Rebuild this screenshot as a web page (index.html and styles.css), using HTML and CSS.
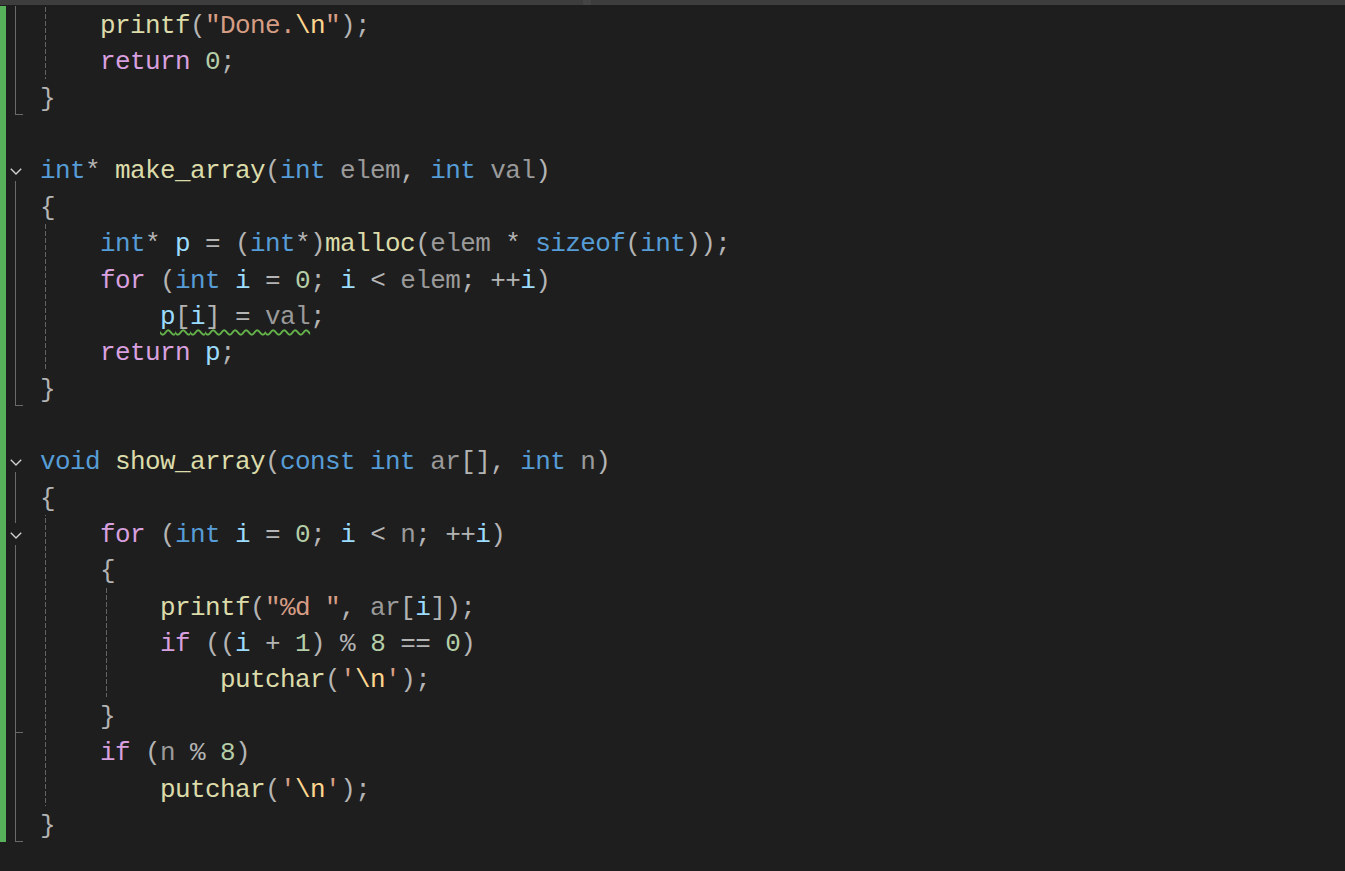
FILE: index.html
```html
<!DOCTYPE html>
<html lang="en">
<head>
<meta charset="utf-8">
<title>Editor</title>
<link rel="stylesheet" href="styles.css">
</head>
<body>
<div class="topbar"><div class="seg"></div><div class="sep"></div><div class="seg rest"></div></div>
<div class="editor">
  <div class="ln"><span class="chg"></span><span class="fold f-v"></span><div class="code g1">    <span class="fn">printf</span>(<span class="str">"Done.</span><span class="esc">\n</span><span class="str">"</span>);</div></div>
  <div class="ln"><span class="chg"></span><span class="fold f-v"></span><div class="code g1">    <span class="ctl">return</span> <span class="num">0</span>;</div></div>
  <div class="ln"><span class="chg"></span><span class="fold f-end"></span><div class="code">}</div></div>
  <div class="ln"><span class="chg"></span><span class="fold"></span><div class="code"> </div></div>
  <div class="ln"><span class="chg"></span><span class="fold f-open"><svg class="chev" width="12" height="7" viewBox="0 0 12 7"><polyline points="0.8,0.8 6,6 11.2,0.8" fill="none" stroke="#d0d0d0" stroke-width="1.4"/></svg></span><div class="code"><span class="kw">int</span>* <span class="fn">make_array</span>(<span class="kw">int</span> <span class="par">elem</span>, <span class="kw">int</span> <span class="par">val</span>)</div></div>
  <div class="ln"><span class="chg"></span><span class="fold f-v"></span><div class="code">{</div></div>
  <div class="ln"><span class="chg"></span><span class="fold f-v"></span><div class="code g1">    <span class="kw">int</span>* <span class="var">p</span> = (<span class="kw">int</span>*)<span class="fn">malloc</span>(<span class="par">elem</span> * <span class="kw">sizeof</span>(<span class="kw">int</span>));</div></div>
  <div class="ln"><span class="chg"></span><span class="fold f-v"></span><div class="code g1">    <span class="ctl">for</span> (<span class="kw">int</span> <span class="var">i</span> = <span class="num">0</span>; <span class="var">i</span> &lt; <span class="par">elem</span>; ++<span class="var">i</span>)</div></div>
  <div class="ln"><span class="chg"></span><span class="fold f-v"></span><div class="code g1">        <span class="sq"><span class="var">p</span>[<span class="var">i</span>] = <span class="par">val</span></span>;</div></div>
  <div class="ln"><span class="chg"></span><span class="fold f-v"></span><div class="code g1">    <span class="ctl">return</span> <span class="var">p</span>;</div></div>
  <div class="ln"><span class="chg"></span><span class="fold f-end"></span><div class="code">}</div></div>
  <div class="ln"><span class="chg"></span><span class="fold"></span><div class="code"> </div></div>
  <div class="ln"><span class="chg"></span><span class="fold f-open"><svg class="chev" width="12" height="7" viewBox="0 0 12 7"><polyline points="0.8,0.8 6,6 11.2,0.8" fill="none" stroke="#d0d0d0" stroke-width="1.4"/></svg></span><div class="code"><span class="kw">void</span> <span class="fn">show_array</span>(<span class="kw">const</span> <span class="kw">int</span> <span class="par">ar</span>[], <span class="kw">int</span> <span class="par">n</span>)</div></div>
  <div class="ln"><span class="chg"></span><span class="fold f-v"></span><div class="code">{</div></div>
  <div class="ln"><span class="chg"></span><span class="fold f-open f-nest"><svg class="chev" width="12" height="7" viewBox="0 0 12 7"><polyline points="0.8,0.8 6,6 11.2,0.8" fill="none" stroke="#d0d0d0" stroke-width="1.4"/></svg></span><div class="code g1">    <span class="ctl">for</span> (<span class="kw">int</span> <span class="var">i</span> = <span class="num">0</span>; <span class="var">i</span> &lt; <span class="par">n</span>; ++<span class="var">i</span>)</div></div>
  <div class="ln"><span class="chg"></span><span class="fold f-v"></span><div class="code g1">    {</div></div>
  <div class="ln"><span class="chg"></span><span class="fold f-v"></span><div class="code g1 g2">        <span class="fn">printf</span>(<span class="str">"%d "</span>, <span class="par">ar</span>[<span class="var">i</span>]);</div></div>
  <div class="ln"><span class="chg"></span><span class="fold f-v"></span><div class="code g1 g2">        <span class="ctl">if</span> ((<span class="var">i</span> + <span class="num">1</span>) % <span class="num">8</span> == <span class="num">0</span>)</div></div>
  <div class="ln"><span class="chg"></span><span class="fold f-v"></span><div class="code g1 g2">            <span class="fn">putchar</span>(<span class="str">'</span><span class="esc">\n</span><span class="str">'</span>);</div></div>
  <div class="ln"><span class="chg"></span><span class="fold f-end"></span><div class="code g1">    }</div></div>
  <div class="ln"><span class="chg"></span><span class="fold f-v"></span><div class="code g1">    <span class="ctl">if</span> (<span class="par">n</span> % <span class="num">8</span>)</div></div>
  <div class="ln"><span class="chg"></span><span class="fold f-v"></span><div class="code g1">        <span class="fn">putchar</span>(<span class="str">'</span><span class="esc">\n</span><span class="str">'</span>);</div></div>
  <div class="ln"><span class="chg"></span><span class="fold f-end"></span><div class="code">}</div></div>
</div>
</body>
</html>
```
FILE: styles.css
```css
* { box-sizing: border-box; }
html, body { margin: 0; height: 100%; }
body {
  background: #1e1e1e;
  overflow: hidden;
  font-family: "Liberation Mono", "DejaVu Sans Mono", monospace;
}
.topbar { height: 5px; display: flex; background: #3d3d3d; }
.topbar .seg { flex: 0 0 583px; }
.topbar .sep { flex: 0 0 8px; background: #454545; }
.topbar .rest { flex: 1; }

.editor { padding-top: 1px; display: flex; flex-direction: column; }
.ln { display: flex; height: 36.36px; }
.chg { flex: 0 0 6px; background: #57b05a; }
.fold {
  flex: 0 0 34px;
  position: relative;
  display: flex;
  align-items: flex-start;
  padding: 17px 0 0 4px;
}
.fold::before, .fold::after { content: none; position: absolute; background: #6a6a6a; }
.f-v::before, .f-end::before {
  content: "";
  left: 9px; top: 0; bottom: 0; width: 1px;
}
.f-end::after {
  content: "";
  left: 9px; bottom: 0; width: 8px; height: 1px;
}
.f-open::before {
  content: "";
  left: 9px; top: 30px; bottom: 0; width: 1px;
}
.f-nest::after {
  content: "";
  left: 9px; top: 0; height: 8px; width: 1px;
}
.chev { display: block; }

.code {
  flex: 1;
  position: relative;
  white-space: pre;
  font-size: 26px;
  letter-spacing: -0.6px;
  line-height: 32px;
  padding-top: 4px;
  color: #b4b4b4;
}
.code.g1::before, .code.g2::after {
  content: "";
  position: absolute;
  top: 0; bottom: 0; width: 1px;
  background: repeating-linear-gradient(to bottom, #626262 0 5px, transparent 5px 7px);
  background-attachment: fixed;
}
.code.g1::before { left: 5px; }
.code.g2::after { left: 66px; }

.kw { color: #569cd6; }
.ctl { color: #d8a0df; }
.fn { color: #dcdcaa; }
.var { color: #9cdcfe; }
.par { color: #9a9a9a; }
.num { color: #b5cea8; }
.str { color: #d69d85; }
.esc { color: #ffd68f; }
.sq {
  text-decoration: underline wavy #64b24a;
  text-decoration-thickness: 1.5px;
  text-decoration-skip-ink: none;
  text-underline-offset: 5px;
}
```
